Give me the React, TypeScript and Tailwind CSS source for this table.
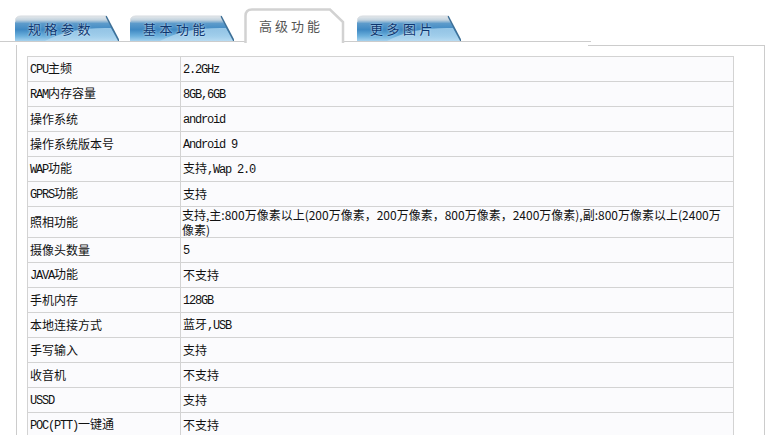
import React from 'react'

const rows: [string, string][] = [
  ['CPU主频', '2.2GHz'],
  ['RAM内存容量', '8GB,6GB'],
  ['操作系统', 'android'],
  ['操作系统版本号', 'Android 9'],
  ['WAP功能', '支持,Wap 2.0'],
  ['GPRS功能', '支持'],
  ['照相功能', ''],
  ['摄像头数量', '5'],
  ['JAVA功能', '不支持'],
  ['手机内存', '128GB'],
  ['本地连接方式', '蓝牙,USB'],
  ['手写输入', '支持'],
  ['收音机', '不支持'],
  ['USSD', '支持'],
  ['POC(PTT)一键通', '不支持'],
]

// latin runs look like the half-width latin of a bitmap song font
function Mixed({ text }: { text: string }) {
  const parts = text.split(/([\x20-\x7e]+)/).filter(Boolean)
  return (
    <>
      {parts.map((p, i) =>
        /^[\x20-\x7e]+$/.test(p) ? (
          <span key={i} className="font-['Liberation_Mono'] tracking-[-1.2px] whitespace-pre">
            {p}
          </span>
        ) : (
          <span key={i}>{p}</span>
        )
      )}
    </>
  )
}

function BlueTab({ label, className }: { label: string; className?: string }) {
  return (
    <div className={`relative w-[104px] h-[26px] shrink-0 ${className || ''}`}>
      <svg className="absolute inset-0" width="104" height="26" viewBox="0 0 104 26">
        <defs>
          <linearGradient id="tabBlue" x1="0" y1="0" x2="0" y2="1">
            <stop offset="0" stopColor="#e6e9ec" />
            <stop offset="0.16" stopColor="#c3d3df" />
            <stop offset="0.3" stopColor="#5d9bcb" />
            <stop offset="0.55" stopColor="#3f89c3" />
            <stop offset="0.8" stopColor="#6cb0dc" />
            <stop offset="1" stopColor="#a6d2ee" />
          </linearGradient>
          <linearGradient id="tabShine" x1="0" y1="0" x2="0" y2="1">
            <stop offset="0" stopColor="#9fcdeb" stopOpacity="0.9" />
            <stop offset="1" stopColor="#c4e2f5" stopOpacity="0.6" />
          </linearGradient>
        </defs>
        <path d="M0 26 L0 7 Q0 1 6 1 L91 1 L104 26 Z" fill="url(#tabBlue)" />
        <path d="M30 26 Q55 12 96 13 L103 26 Z" fill="url(#tabShine)" />
        <path d="M91 1 L104 26" stroke="#3d6f96" strokeWidth="1.5" />
        <path d="M0 7 Q0 1 6 1 L91 1" stroke="#d6dbe0" strokeWidth="1" fill="none" />
      </svg>
      <span className="absolute left-[13px] top-[6px] text-[13px] leading-[16px] tracking-[3.5px] text-[#0c3670] font-['Noto_Sans_CJK_SC',sans-serif] [text-shadow:0_0_2px_#e8f4fc]">
        {label}
      </span>
    </div>
  )
}

function ActiveTab({ label }: { label: string }) {
  return (
    <div className="relative z-10 w-[101px] h-[35px] shrink-0 -mb-px ml-[10px]">
      <svg className="absolute inset-0" width="101" height="35" viewBox="0 0 101 35">
        <path d="M1.5 35 L1.5 8 Q1.5 1.5 8 1.5 L86 1.5 L99 14 L99 35 Z" fill="#ffffff" />
        <path
          d="M1.5 35 L1.5 8 Q1.5 1.5 8 1.5 L86 1.5 L99 14 L99 35"
          fill="none"
          stroke="#d2d2d2"
          strokeWidth="2.5"
        />
      </svg>
      <span className="absolute left-[15px] top-[10px] text-[13px] leading-[16px] tracking-[3px] text-[#555555] font-['Noto_Sans_CJK_SC',sans-serif]">
        {label}
      </span>
    </div>
  )
}

export default function App() {
  return (
    <div className="w-[773px] h-[435px] bg-white overflow-hidden font-['Noto_Sans_CJK_SC',sans-serif] text-[12px] text-[#111111]">
      {/* tab strip */}
      <div className="relative h-[42px]">
        <div className="absolute left-0 top-[41px] w-[588px] border-t border-[#cccccc]" />
        <div className="absolute left-[587px] top-[41px] w-[4px] h-[4px] border-t border-[#cccccc]" />
        <div className="relative flex items-end h-[42px] pl-[15px]">
          <BlueTab label="规格参数" className="mb-px" />
          <BlueTab label="基本功能" className="mb-px ml-[11px]" />
          <ActiveTab label="高级功能" />
          <BlueTab label="更多图片" className="mb-px ml-[12px]" />
        </div>
      </div>

      {/* content box */}
      <div className="mt-[3px] ml-[16px] w-[749px] border-l border-r border-[#cccccc]">
        <div className="ml-[571px] border-t border-[#cccccc]" />
        <div className="pl-[10px] pt-[10px]">
          <table className="table-fixed border-collapse w-[707px] bg-[#fbfbfd]">
            <colgroup>
              <col className="w-[153px]" />
              <col />
            </colgroup>
            <tbody>
              {rows.map(([k, v]) => (
                <tr key={k} className={k === '照相功能' ? 'h-[31px]' : 'h-[25px]'}>
                  <td className="border border-[#d3d3d3] pl-[2px] p-0 leading-[14px] align-middle whitespace-nowrap">
                    <Mixed text={k} />
                  </td>
                  {k === '照相功能' ? (
                    <td className="border border-[#d3d3d3] pl-[1px] p-0 leading-[15px] align-middle">
                      <div className="whitespace-nowrap">
                        支持,主:800万像素以上(200万像素，200万像素，800万像素，2400万像素),副:800万像素以上(2400万
                      </div>
                      <div>像素)</div>
                    </td>
                  ) : (
                    <td className="border border-[#d3d3d3] pl-[2px] p-0 leading-[14px] align-middle whitespace-nowrap">
                      <Mixed text={v} />
                    </td>
                  )}
                </tr>
              ))}
            </tbody>
          </table>
        </div>
      </div>
    </div>
  )
}
